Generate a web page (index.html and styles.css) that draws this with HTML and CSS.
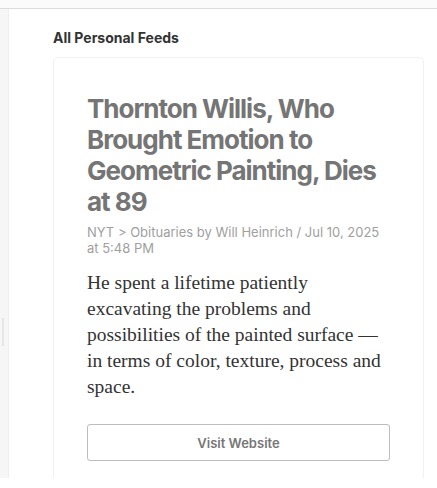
FILE: index.html
```html
<!DOCTYPE html>
<html>
<head>
<meta charset="utf-8">
<link rel="stylesheet" href="styles.css">
</head>
<body>
<div class="topbar"></div>
<div class="layout">
  <aside class="rail"><div class="thumb"></div></aside>
  <main class="main">
    <h2 class="section-title">All Personal Feeds</h2>
    <article class="card">
      <h1 class="title">Thornton Willis, Who Brought Emotion to Geometric Painting, Dies at 89</h1>
      <p class="meta">NYT &gt; Obituaries by Will Heinrich / Jul 10, 2025 at 5:48 PM</p>
      <p class="summary">He spent a lifetime patiently excavating the problems and possibilities of the painted surface — in terms of color, texture, process and space.</p>
      <button class="visit">Visit Website</button>
    </article>
  </main>
</div>
</body>
</html>
```
FILE: styles.css
```css
html, body {
  margin: 0;
  padding: 0;
  background: #ffffff;
  height: 100%;
  overflow: hidden;
}
body {
  font-family: Inter, "Noto Sans", sans-serif;
}
.topbar {
  height: 8px;
  background: #fbfbfb;
  border-bottom: 1px solid #dcdcdc;
}
.layout {
  display: flex;
  height: 469px;
}
.rail {
  width: 9px;
  background: #f6f6f6;
  border-right: 1px solid #efefef;
  display: flex;
  flex-direction: column;
  padding-top: 309px;
  box-sizing: border-box;
}
.thumb {
  margin-left: 2px;
  width: 2px;
  height: 28px;
  background: #e6e6e6;
}
.main {
  flex: 1;
  padding: 20px 13px 0 44px;
  display: flex;
  flex-direction: column;
}
.section-title {
  margin: 0 0 10px;
  font-size: 14px;
  line-height: 18px;
  font-weight: 700;
  color: #333333;
}
.card {
  flex: 1;
  border: 1px solid #f0f0f0;
  border-bottom: none;
  border-radius: 5px 5px 0 0;
  padding: 35px 33px 0 33px;
}
.title {
  margin: 0;
  font-size: 26px;
  line-height: 31px;
  font-weight: 650;
  color: #757575;
  letter-spacing: -1px;
}
.meta {
  margin: 7px 0 0;
  font-size: 13px;
  line-height: 16px;
  color: #a0a0a0;
}
.summary {
  margin: 14px 0 0;
  font-family: "Liberation Serif", serif;
  font-size: 19.5px;
  line-height: 26px;
  color: #333333;
}
.visit {
  display: block;
  width: 100%;
  margin-top: 24px;
  height: 37px;
  background: #ffffff;
  border: 1px solid #bdbdbd;
  border-radius: 3px;
  font-family: Inter, "Noto Sans", sans-serif;
  font-size: 13px;
  font-weight: 600;
  color: #777777;
}
```
